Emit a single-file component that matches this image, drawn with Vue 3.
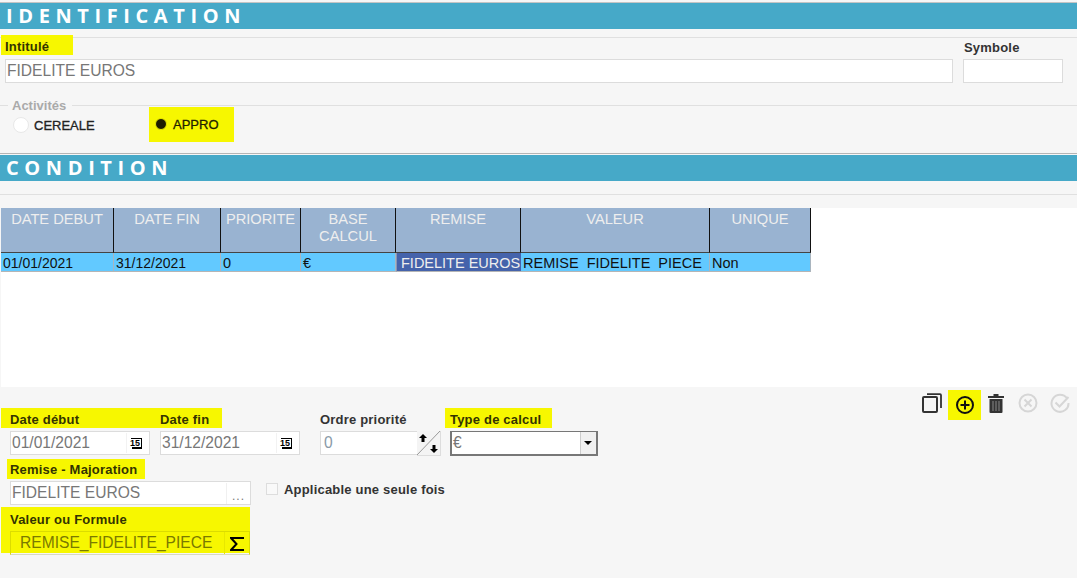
<script setup>
const columns = [
  { label: 'DATE DEBUT', value: '01/01/2021', digits: true },
  { label: 'DATE FIN', value: '31/12/2021', digits: true },
  { label: 'PRIORITE', value: '0' },
  { label: 'BASE CALCUL', value: '€' },
  { label: 'REMISE', value: 'FIDELITE EUROS', selected: true },
  { label: 'VALEUR', value: 'REMISE  FIDELITE  PIECE' },
  { label: 'UNIQUE', value: 'Non' },
]
</script>

<template>
  <div class="page">
    <h2 class="band">IDENTIFICATION</h2>
    <section class="identification">
      <div class="id-row">
        <div class="id-main">
          <label class="mark intitule">Intitulé</label>
          <div class="field wide">FIDELITE EUROS</div>
        </div>
        <div class="id-side">
          <label class="plain">Symbole</label>
          <div class="field symbol"></div>
        </div>
      </div>
      <div class="legend"><span class="legend-text">Activités</span></div>
      <div class="radios">
        <div class="radio first"><i class="dot"></i><span>CEREALE</span></div>
        <div class="radio checked"><i class="dot"></i><span>APPRO</span></div>
      </div>
    </section>

    <h2 class="band second">CONDITION</h2>
    <div class="rule"></div>

    <div class="table-area">
      <div class="grid">
        <div v-for="c in columns" :key="c.label" class="th">{{ c.label }}</div>
        <div v-for="c in columns" :key="c.value" class="td" :class="{ selected: c.selected, digits: c.digits }">{{ c.value }}</div>
      </div>
    </div>

    <div class="tools">
      <svg class="tool copy" viewBox="0 0 20 20" width="20" height="20" fill="none" stroke="#333" stroke-width="2">
        <rect x="1" y="4" width="14" height="15" rx="1" />
        <path d="M5 1.200h13a1 1 0 0 1 1 1V15" stroke-width="1.800" />
      </svg>
      <span class="add">
        <svg viewBox="0 0 18 18" width="18" height="18" fill="none" stroke="#111" stroke-width="2">
          <circle cx="9" cy="9" r="8" />
          <path d="M9 4.500v9M4.500 9h9" />
        </svg>
      </span>
      <svg class="tool trash" viewBox="0 0 16 20" width="16" height="20">
        <path d="M5.500 1h5v2H16v2H0V3h5.500z" fill="#333" />
        <path d="M1.500 6h13v13a1 1 0 0 1-1 1h-11a1 1 0 0 1-1-1z" fill="#333" />
        <path d="M5 8v10M8 8v10M11 8v10" stroke="#888" stroke-width="1" />
      </svg>
      <svg class="tool cancel" viewBox="0 0 20 20" width="20" height="20" fill="none" stroke="#d6d6d6" stroke-width="2">
        <circle cx="10" cy="10" r="8.500" />
        <path d="M6.500 6.500l7 7M13.500 6.500l-7 7" />
      </svg>
      <svg class="tool confirm" viewBox="0 0 20 20" width="20" height="20" fill="none" stroke="#d6d6d6" stroke-width="2">
        <path d="M17 5.500A8.500 8.500 0 1 0 18.500 10" />
        <path d="M5.500 9.500l4 4 9-9.500" />
      </svg>
    </div>

    <div class="form">
      <div class="row-top">
        <div class="dates">
          <div class="mark date-labels">
            <label class="lab-start">Date début</label>
            <label>Date fin</label>
          </div>
          <div class="date-inputs">
            <div class="field date">01/01/2021<span class="cal">15</span></div>
            <div class="field date">31/12/2021<span class="cal">15</span></div>
          </div>
        </div>
        <div class="order">
          <label class="plain">Ordre priorité</label>
          <div class="field num">
            0
            <span class="spin">
              <svg viewBox="0 0 23 24" width="23" height="24">
                <path d="M0 24L23 0" stroke="#999" stroke-width="1" />
                <path d="M6 3l4 4H7.500v4h-3V7H2zM17 22l4-4h-2.500v-4h-3v4H13z" fill="#000" />
              </svg>
            </span>
          </div>
        </div>
        <div class="type">
          <label class="mark type-label">Type de calcul</label>
          <div class="select">€<span class="arrow"><i></i></span></div>
        </div>
      </div>

      <div class="row-remise">
        <div class="remise-col">
          <label class="mark remise-label">Remise - Majoration</label>
          <div class="field remise">FIDELITE EUROS<span class="dots">...</span></div>
        </div>
        <div class="check">
          <i class="box"></i>
          <span>Applicable une seule fois</span>
        </div>
      </div>

      <div class="mark valeur">
        <label>Valeur ou Formule</label>
        <div class="formula">
          REMISE_FIDELITE_PIECE
          <span class="sigma">
            <svg viewBox="0 0 14 14" width="14" height="14" fill="none" stroke="#000" stroke-width="2">
              <path d="M13 2V1H1l5.500 6L1 13h12v-1" />
            </svg>
          </span>
        </div>
      </div>
    </div>
  </div>
</template>

<style scoped>
.page {
  width: 1077px;
  height: 578px;
  overflow: hidden;
  background: #f6f6f6;
  padding-top: 2px;
  box-sizing: border-box;
  font-family: "Liberation Sans", Arial, sans-serif;
  color: #333;
}
.band {
  margin: 0;
  height: 26px;
  border-top: 1px solid #c4c4c4;
  background: #46a9c8;
  background-clip: padding-box;
  color: #fff;
  font: 700 20px/25px "Open Sans", sans-serif;
  letter-spacing: 5.6px;
  padding-left: 6px;
}
.identification {
  margin-top: 8px;
  border-top: 1px solid #e0e0e0;
  height: 115px;
  border-bottom: 1px solid #b5b5b5;
}
.band.second {
  margin-top: 1px;
  border-top: 0;
}
.id-row {
  display: flex;
}
.mark {
  background: #f7f700;
  color: #333300;
}
label,
.plain {
  font-size: 13px;
  font-weight: 700;
  letter-spacing: 0.2px;
  display: block;
}
.intitule {
  margin: -3px 0 0 1px;
  width: 68px;
  height: 20px;
  padding-left: 4px;
  line-height: 24px;
}
.id-main {
  width: 963px;
}
.field {
  box-sizing: border-box;
  height: 24px;
  background: #fff;
  border: 1px solid #dcdcdc;
  color: #777;
  font-size: 15.6px;
  line-height: 22px;
  position: relative;
}
.wide {
  width: 948px;
  margin: 4px 0 0 5px;
  padding-left: 1px;
}
.id-side .plain {
  margin: 2px 0 0 1px;
  height: 19px;
  line-height: 15px;
}
.symbol {
  width: 100px;
}
.legend {
  margin: 22px 0 0;
  height: 1px;
  background: #e0e0e0;
  position: relative;
}
.legend-text {
  position: absolute;
  left: 8px;
  top: -7px;
  padding: 0 6px 0 4px;
  background: #f6f6f6;
  font-size: 13px;
  line-height: 15px;
  font-weight: 700;
  color: #aaa;
}
.radios {
  display: flex;
  margin-top: 1px;
  height: 35px;
}
.radio {
  display: flex;
  align-items: center;
  font-size: 13px;
  color: #222;
  -webkit-text-stroke: 0.3px;
}
.first {
  width: 149px;
  padding-left: 13px;
  box-sizing: border-box;
  height: 36px;
}
.checked {
  width: 85px;
  background: #f7f700;
  height: 35px;
  padding-left: 6px;
  box-sizing: border-box;
  color: #221f00;
}
.dot {
  width: 16px;
  height: 16px;
  border-radius: 50%;
  background: #fff;
  box-sizing: border-box;
  border: 1px solid #e8e8e8;
  margin-right: 5px;
  margin-top: -1px;
}
.checked .dot {
  width: 12px;
  height: 12px;
  border: 1px solid #e8e800;
  background: #1e1c00;
  margin-right: 6px;
}
.rule {
  margin-top: 13px;
  height: 1px;
  background: #e0e0e0;
}
.table-area {
  margin: 13px 0 0 1px;
  height: 179px;
  background: #fff;
}
.grid {
  display: grid;
  grid-template-columns: 113px 107px 80px 95px 125px 189px 101px;
  grid-template-rows: 45px 19px;
  width: 810px;
}
.th {
  background: #99b3d1;
  color: #eee;
  font-size: 14.67px;
  line-height: 17px;
  text-align: center;
  padding: 3px 2px 0;
  box-sizing: border-box;
  border-right: 1px solid #111;
  border-bottom: 1px solid #444;
}
.td {
  background: #62c9ff;
  color: #111;
  font-size: 14.5px;
  line-height: 20px;
  padding-left: 2px;
  white-space: pre;
  overflow: hidden;
  box-sizing: border-box;
  border-right: 1px solid #a9b5bf;
  border-bottom: 1px solid #b5b5b5;
}
.td.digits {
  font-size: 14px;
}
.td.selected {
  background: #4563ab;
  color: #eee;
  padding-left: 4px;
  border-right: 0;
  border-left: 1px solid #8a97b5;
}
.tools {
  display: flex;
  justify-content: flex-end;
  align-items: flex-start;
  height: 30px;
  margin: 3px 7px -12px 0;
}
.tool {
  margin-top: 3px;
}
.copy {
  margin-right: 6px;
}
.add {
  width: 33px;
  height: 30px;
  background: #f7f700;
  display: flex;
  align-items: center;
  justify-content: center;
}
.trash {
  margin-left: 7px;
}
.cancel {
  margin-left: 14px;
}
.confirm {
  margin-left: 12px;
}
.row-top {
  display: flex;
  align-items: flex-start;
}
.dates {
  width: 320px;
}
.date-labels {
  margin-left: 1px;
  width: 221px;
  height: 20px;
  display: flex;
  padding-left: 9px;
  box-sizing: border-box;
}
.date-labels label {
  line-height: 23px;
}
.lab-start {
  width: 150px;
}
.date-inputs {
  display: flex;
  gap: 10px;
  margin: 3px 0 0 10px;
}
.date {
  width: 140px;
  padding-left: 1px;
}
.cal {
  position: absolute;
  right: 0;
  top: 0;
  width: 22px;
  height: 22px;
  font-size: 9px;
  line-height: 9px;
  color: #000;
  text-indent: 3px;
  display: block;
  background: linear-gradient(#000, #000) 4px 6px / 10px 1px no-repeat, linear-gradient(#000, #000) 14px 6px / 1px 10px no-repeat,
    linear-gradient(#000, #000) 5px 15px / 10px 2px no-repeat;
  padding-top: 7px;
  box-sizing: border-box;
  font-weight: 700;
}
.cal::before {
  content: "";
  position: absolute;
  left: -1px;
  top: 1px;
  height: 20px;
  border-left: 1px solid #f2f2f2;
}
.order {
  width: 130px;
}
.order .plain {
  height: 23px;
  line-height: 23px;
}
.num {
  width: 121px;
  padding-left: 3px;
  color: #8a9aa8;
}
.spin {
  position: absolute;
  right: -1px;
  top: -1px;
  height: 24px;
  width: 23px;
  border-right: 1px solid #ddd;
  border-bottom: 1px solid #ddd;
  background: #f4f4f4;
  display: block;
}
.spin svg {
  display: block;
}
.type-label {
  width: 102px;
  margin-left: -5px;
  padding-left: 5px;
  height: 20px;
  line-height: 23px;
}
.select {
  margin-top: 3px;
  box-sizing: border-box;
  width: 148px;
  height: 25px;
  background: #fff;
  border: 2px solid #777;
  border-top-width: 1px;
  color: #777;
  font-size: 15.6px;
  line-height: 21px;
  padding-left: 1px;
  position: relative;
}
.arrow {
  position: absolute;
  right: 0;
  top: 0;
  bottom: 0;
  width: 15px;
  background: #f0f0f0;
  border-left: 1px solid #ccc;
}
.arrow i {
  position: absolute;
  left: 3px;
  top: 9px;
  border: 4px solid transparent;
  border-top: 4px solid #000;
}
.row-remise {
  display: flex;
  margin-top: 3px;
}
.remise-col {
  width: 266px;
}
.remise-label {
  margin-left: 7px;
  width: 135px;
  height: 20px;
  padding-left: 3px;
  line-height: 21px;
}
.remise {
  margin: 2px 0 0 10px;
  width: 241px;
  padding-left: 1px;
}
.dots {
  position: absolute;
  right: 0;
  top: 1px;
  bottom: 0;
  width: 24px;
  border-left: 1px solid #f0f0f0;
  font-size: 12px;
  text-align: center;
  line-height: 26px;
  color: #777;
  letter-spacing: 1px;
  box-sizing: border-box;
}
.check {
  display: flex;
  align-items: flex-start;
  margin-top: 24px;
  font-size: 13px;
  font-weight: 700;
  letter-spacing: 0.2px;
}
.box {
  width: 12px;
  height: 12px;
  box-sizing: border-box;
  border: 1px solid #ddd;
  background: #f9f9f9;
  margin-right: 6px;
}
.check span {
  margin-top: -1px;
}
.valeur {
  margin: 2px 0 0 1px;
  width: 249px;
  height: 46px;
  padding: 1px 0 0 9px;
  box-sizing: border-box;
}
.valeur label {
  height: 23px;
  line-height: 24px;
}
.formula {
  box-sizing: border-box;
  width: 240px;
  height: 24px;
  border: 1px solid #dcdc00;
  border-bottom-color: #d8d8c0;
  color: #7a7a00;
  font-size: 15.6px;
  line-height: 22px;
  padding-left: 9px;
  position: relative;
}
.sigma {
  position: absolute;
  right: 0;
  top: 0;
  bottom: 0;
  width: 25px;
  border-left: 1px solid #e8e800;
  display: flex;
  align-items: center;
  justify-content: center;
  padding-top: 2px;
  box-sizing: border-box;
}
</style>

<style>
html,
body {
  margin: 0;
  background: #f6f6f6;
}
</style>
